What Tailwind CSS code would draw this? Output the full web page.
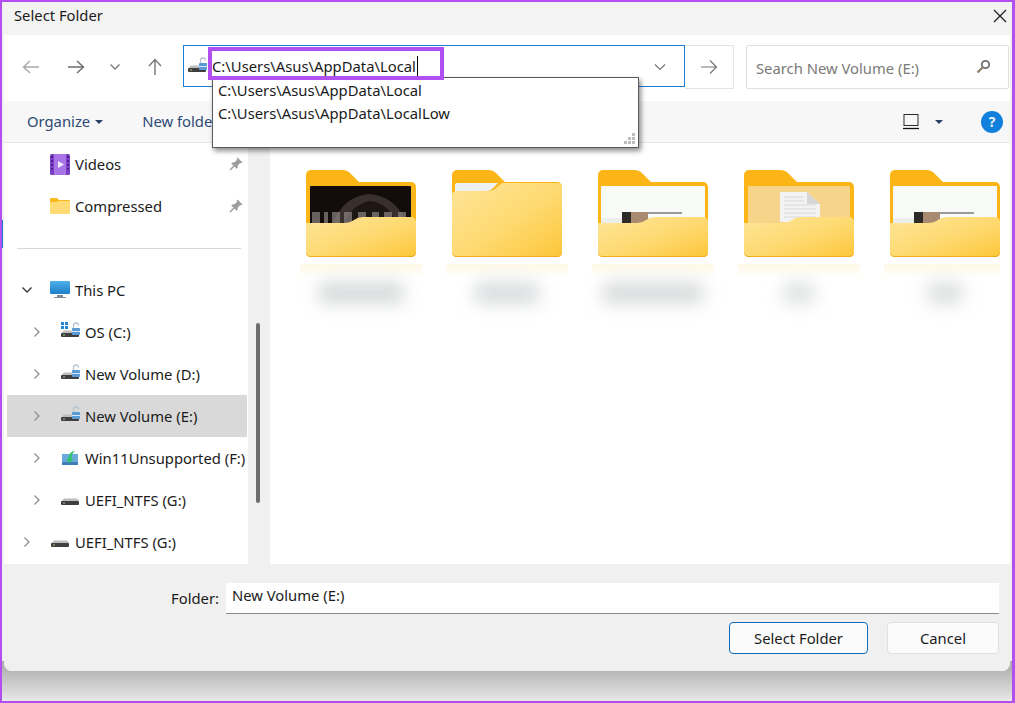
<!DOCTYPE html>
<html>
<head>
<meta charset="utf-8">
<title>Select Folder</title>
<script src="https://cdn.jsdelivr.net/npm/@tailwindcss/browser@4"></script>
</head>
<body class="m-0 overflow-hidden bg-white font-['Noto_Sans',sans-serif] text-[14.8px] text-[#1b1b1b]">

<!-- shared icons -->
<svg class="absolute h-0 w-0" xmlns="http://www.w3.org/2000/svg">
  <defs>
    <linearGradient id="front" x1="0" y1="0" x2="1" y2="1">
      <stop offset="0" stop-color="#fee599"/>
      <stop offset="0.55" stop-color="#fed96f"/>
      <stop offset="1" stop-color="#fdc63a"/>
    </linearGradient>
    <linearGradient id="screen" x1="0" y1="0" x2="0" y2="1">
      <stop offset="0" stop-color="#4fb0ea"/>
      <stop offset="1" stop-color="#1e7ec8"/>
    </linearGradient>
    <symbol id="folderBack" viewBox="0 0 110 87">
      <path d="M5 0H36q5 0 8 3l9 9H105a5 5 0 0 1 5 5V82a5 5 0 0 1-5 5H5a5 5 0 0 1-5-5V5a5 5 0 0 1 5-5z" fill="#fbb516"/>
    </symbol>
    <symbol id="folderFront" viewBox="0 0 110 87">
      <path d="M0 53H38q6 0 10-3t9-3H105a5 5 0 0 1 5 5V82a5 5 0 0 1-5 5H5a5 5 0 0 1-5-5z" fill="url(#front)"/>
      <path d="M0 83a5 5 0 0 0 5 4H105a5 5 0 0 0 5-4a5 5 0 0 1-5 3H5a5 5 0 0 1-5-3z" fill="#f3aa1c"/>
    </symbol>
    <symbol id="drive" viewBox="0 0 20 20">
      <path d="M2 10.500L4 8.500H17L19 10.500V11H2z" fill="#bdbdbd"/>
      <rect x="1" y="11" width="18" height="4" rx="1" fill="#3f3f3f"/>
      <rect x="3" y="12.500" width="2" height="1" fill="#9bd08a"/>
    </symbol>
    <symbol id="lock" viewBox="0 0 20 20">
      <path d="M13.500 6V3.500a2.500 2.500 0 0 1 5 0" fill="none" stroke="#b8c4cf" stroke-width="1.300"/>
      <rect x="12" y="6" width="8" height="7" rx="0.800" fill="#5b9bd5"/>
      <rect x="12" y="9" width="8" height="1" fill="#d6e6f5"/>
    </symbol>
    <symbol id="pin" viewBox="0 0 14 14">
      <path d="M8.500 0.500L13.500 5.500L12.300 6.300L11.200 5.900L8.700 8.400L8.600 10.700L7.600 11.700L2.300 6.400L3.300 5.400L5.600 5.300L8.100 2.800L7.700 1.700z" fill="#9c9c9c"/>
      <path d="M5 9L1 13" stroke="#9c9c9c" stroke-width="1.500"/>
    </symbol>
    <symbol id="chevron" viewBox="0 0 10 14">
      <path d="M2.500 2.500L7 7L2.500 11.500" fill="none" stroke="#8a8a8a" stroke-width="1.200"/>
    </symbol>
    <symbol id="pagePeek" viewBox="0 0 110 87">
      <rect x="3" y="16" width="104" height="40" rx="1" fill="#f8faf7"/>
      <path d="M3 48H107V56H3z" fill="#eceeec"/>
      <rect x="50" y="42" width="34" height="2" fill="#9a9a9a"/>
      <rect x="24" y="42" width="9" height="14" fill="#2d2a28"/>
      <rect x="33" y="42" width="17" height="14" fill="#a78a70"/>
    </symbol>
  </defs>
</svg>

<div class="relative h-[703px] w-[1015px] overflow-hidden border-b-2 border-l-2 border-r-[3px] border-t-2 border-[#b14ff0] bg-[#f0f0f0]">

  <!-- window -->
  <div class="relative mx-[2px] flex h-[669px] flex-col rounded-b-lg bg-[#f0f0f0]">

    <!-- title bar -->
    <div class="flex h-[33px] items-center justify-between bg-[#f3f3f3] pl-[10px] pr-[2px]">
      <span class="pb-[6px]">Select Folder</span>
      <svg class="mb-[5px] mr-[1px] h-[14px] w-[14px]" viewBox="0 0 14 14"><path d="M1 1L13 13M13 1L1 13" stroke="#222" stroke-width="1.300"/></svg>
    </div>

    <!-- address row -->
    <div class="flex h-[66px] items-start bg-white pt-[10px]">
      <div class="flex h-[44px] w-[179px] items-center">
        <svg class="ml-[18px] h-[18px] w-[18px]" viewBox="0 0 18 18"><path d="M17 9H1.500M8 3L1.500 9L8 15" fill="none" stroke="#a9a9a9" stroke-width="1.400"/></svg>
        <svg class="ml-[27px] h-[18px] w-[18px]" viewBox="0 0 18 18"><path d="M1 9H16.500M10 3L16.500 9L10 15" fill="none" stroke="#6b6b6b" stroke-width="1.400"/></svg>
        <svg class="ml-[24px] h-[10px] w-[12px]" viewBox="0 0 12 10"><path d="M1.500 2.500L6 7L10.500 2.500" fill="none" stroke="#777" stroke-width="1.300"/></svg>
        <svg class="ml-[25px] h-[18px] w-[18px]" viewBox="0 0 18 18"><path d="M9 17V1.500M3 8L9 1.500L15 8" fill="none" stroke="#777" stroke-width="1.400"/></svg>
      </div>
      <div class="flex h-[42px] w-[502px] items-center border border-[#1a7fd4] pl-[3px] pr-[18px] pt-px">
        <svg class="h-[20px] w-[20px]" viewBox="0 0 20 20"><use href="#drive"/><use href="#lock"/></svg>
        <span class="ml-[5px]">C:\Users\Asus\AppData\Local</span>
        <span class="ml-px h-[21px] w-px bg-black"></span>
        <svg class="ml-auto h-[10px] w-[12px]" viewBox="0 0 12 10"><path d="M1 2.500L6 7.500L11 2.500" fill="none" stroke="#777" stroke-width="1.200"/></svg>
      </div>
      <div class="flex h-[44px] w-[49px] items-center justify-center border border-l-0 border-[#e3e3e3]">
        <svg class="h-[18px] w-[18px]" viewBox="0 0 18 18"><path d="M1 9H16.500M10 2.500L16.500 9L10 15.500" fill="none" stroke="#777" stroke-width="1.200"/></svg>
      </div>
      <div class="ml-[12px] flex h-[44px] w-[263px] items-center justify-between rounded-[2px] border border-[#e0e0e0] pl-[9px] pr-[17px] pt-[2px] text-[#7a7a7a]">
        <span>Search New Volume (E:)</span>
        <svg class="mb-[3px] h-[15px] w-[15px]" viewBox="0 0 15 15"><circle cx="9.500" cy="5.500" r="3.700" fill="none" stroke="#6f6f6f" stroke-width="1.800"/><path d="M6.800 8.200L1.500 13.500" stroke="#8d7d6d" stroke-width="2.200"/></svg>
      </div>
    </div>

    <!-- toolbar -->
    <div class="flex h-[42px] items-center border-b border-[#e6e6e6] bg-[#f7f7f7] pl-[23px] pr-[7px] text-[#2c4a75]">
      <span>Organize</span>
      <span class="ml-[5px] h-0 w-0 border-x-[4px] border-t-[4px] border-x-transparent border-t-[#2c3e66]"></span>
      <span class="ml-[39px]">New folder</span>
      <svg class="ml-auto h-[18px] w-[18px]" viewBox="0 0 18 18"><rect x="2" y="1.500" width="14" height="11" fill="#f6f6f6" stroke="#2b2b2b"/><path d="M1 15.500H17" stroke="#111" stroke-width="1.300"/></svg>
      <span class="ml-[15px] h-0 w-0 border-x-[4px] border-t-[4px] border-x-transparent border-t-[#2c3e66]"></span>
      <span class="ml-[38px] flex h-[22px] w-[22px] items-center justify-center rounded-full bg-[#1180dc] text-[14px] font-bold text-[#e8f3fc]">?</span>
    </div>

    <!-- main -->
    <div class="flex h-[421px]">
      <!-- nav pane -->
      <div class="w-[244px] overflow-hidden bg-white pl-[3px] pr-px">
        <div class="flex h-[42px] items-center pl-[43px] pr-[4px]">
          <svg class="h-[21px] w-[20px]" viewBox="0 0 20 21"><rect width="20" height="21" rx="1.500" fill="#7d3fc9"/><rect x="4" width="12" height="21" fill="#a974e6"/><path d="M8 7L14 10.500L8 14z" fill="#f4ecff"/><path d="M1 3h2M1 7h2M1 11h2M1 15h2M17 3h2M17 7h2M17 11h2M17 15h2" stroke="#3f1f73" stroke-width="1.500"/></svg>
          <span class="ml-[5px] pt-px">Videos</span>
          <svg class="ml-auto h-[14px] w-[14px]" viewBox="0 0 14 14"><use href="#pin"/></svg>
        </div>
        <div class="flex h-[42px] items-center pl-[43px] pr-[4px]">
          <svg class="h-[16px] w-[20px]" viewBox="0 0 20 16"><path d="M1 0H7L9 2H19a1 1 0 0 1 1 1V15a1 1 0 0 1-1 1H1a1 1 0 0 1-1-1V1a1 1 0 0 1 1-1z" fill="#f9b91f"/><path d="M0 4H7L9 3H20V15a1 1 0 0 1-1 1H1a1 1 0 0 1-1-1z" fill="#fedb74"/></svg>
          <span class="ml-[5px] pt-px">Compressed</span>
          <svg class="ml-auto h-[14px] w-[14px]" viewBox="0 0 14 14"><use href="#pin"/></svg>
        </div>
        <div class="flex h-[42px] items-center pl-[10px] pr-[6px]"><div class="h-px w-full bg-[#d9d9d9]"></div></div>
        <div class="flex h-[42px] items-center pl-[14px]">
          <svg class="h-[10px] w-[12px]" viewBox="0 0 12 10"><path d="M1.500 2.500L6 7L10.500 2.500" fill="none" stroke="#333" stroke-width="1.300"/></svg>
          <svg class="ml-[17px] h-[20px] w-[20px]" viewBox="0 0 20 20"><rect y="1" width="20" height="13" rx="1" fill="url(#screen)"/><path d="M7 15H13V17H16V18H4V17H7z" fill="#7f8a94"/></svg>
          <span class="ml-[5px] pt-px">This PC</span>
        </div>
        <div class="flex h-[42px] items-center pl-[25px]">
          <svg class="h-[14px] w-[10px]" viewBox="0 0 10 14"><use href="#chevron"/></svg>
          <svg class="ml-[18px] h-[20px] w-[20px]" viewBox="0 0 20 20"><use href="#drive"/><use href="#lock"/><path d="M1 0h3v3H1zM5 0h3v3H5zM1 4h3v3H1zM5 4h3v3H5z" fill="#1f86d8"/></svg>
          <span class="ml-[5px] pt-px">OS (C:)</span>
        </div>
        <div class="flex h-[42px] items-center pl-[25px]">
          <svg class="h-[14px] w-[10px]" viewBox="0 0 10 14"><use href="#chevron"/></svg>
          <svg class="ml-[18px] h-[20px] w-[20px]" viewBox="0 0 20 20"><use href="#drive"/><use href="#lock"/></svg>
          <span class="ml-[5px] pt-px">New Volume (D:)</span>
        </div>
        <div class="flex h-[42px] items-center bg-[#d9d9d9] pl-[25px]">
          <svg class="h-[14px] w-[10px]" viewBox="0 0 10 14"><use href="#chevron"/></svg>
          <svg class="ml-[18px] h-[20px] w-[20px]" viewBox="0 0 20 20"><use href="#drive"/><use href="#lock"/></svg>
          <span class="ml-[5px] pt-px">New Volume (E:)</span>
        </div>
        <div class="flex h-[42px] items-center pl-[25px]">
          <svg class="h-[14px] w-[10px]" viewBox="0 0 10 14"><use href="#chevron"/></svg>
          <svg class="ml-[18px] h-[20px] w-[20px]" viewBox="0 0 20 20"><path d="M2 6H18V17H2z" fill="#6ba9dc"/><path d="M2 14H18V17H2z" fill="#3e7fb8"/><path d="M6 11L9.500 15L14 11H11.500C11.500 7 12.500 5 15 3C10.500 3.500 8.500 6.500 8.500 11z" fill="#2fc46a"/></svg>
          <span class="ml-[5px] whitespace-nowrap pt-px">Win11Unsupported (F:)</span>
        </div>
        <div class="flex h-[42px] items-center pl-[25px]">
          <svg class="h-[14px] w-[10px]" viewBox="0 0 10 14"><use href="#chevron"/></svg>
          <svg class="ml-[18px] h-[20px] w-[20px]" viewBox="0 0 20 20"><use href="#drive"/></svg>
          <span class="ml-[5px] pt-px">UEFI_NTFS (G:)</span>
        </div>
        <div class="flex h-[42px] items-center pl-[15px]">
          <svg class="h-[14px] w-[10px]" viewBox="0 0 10 14"><use href="#chevron"/></svg>
          <svg class="ml-[18px] h-[20px] w-[20px]" viewBox="0 0 20 20"><use href="#drive"/></svg>
          <span class="ml-[5px] pt-px">UEFI_NTFS (G:)</span>
        </div>
      </div>

      <!-- scroll strip -->
      <div class="w-[22px] pl-[8px] pt-[180px]">
        <div class="h-[180px] w-[4px] rounded-full bg-[#6e6e6e]"></div>
      </div>

      <!-- folders -->
      <div class="flex flex-1 items-start gap-[36px] overflow-hidden bg-white pl-[36px] pt-[27px]">
        <div class="w-[110px]">
          <svg class="h-[87px] w-[110px]" viewBox="0 0 110 87">
            <use href="#folderBack"/>
            <rect x="4" y="16" width="101" height="40" rx="1" fill="#120c0a"/>
            <path d="M26 56Q36 27 62 24Q90 25 102 56z" fill="#3a302b"/>
            <path d="M36 56Q46 34 64 31Q82 32 92 56z" fill="#1d1613"/>
            <path d="M6 42h8v12H6zM18 42h4v12H18zM26 42h8v12H26zM38 42h8v12H38zM52 42h8v12H52zM66 42h7v12H66zM78 42h8v12H78zM92 42h8v12H92z" fill="#8b8583" opacity="0.7"/>
            <use href="#folderFront"/>
          </svg>
          <div class="-ml-[6px] mt-[7px] h-[14px] w-[122px] bg-gradient-to-b from-[#fff8e6] to-white"></div>
          <div class="mx-auto mt-[5px] h-[20px] w-[84px] bg-[#d3d6d7] blur-[9px]"></div>
        </div>
        <div class="w-[110px]">
          <svg class="h-[87px] w-[110px]" viewBox="0 0 110 87">
            <use href="#folderBack"/>
            <path d="M3 22V15a2 2 0 0 1 2-2H46L40 19Q38 21 34 21H5q-2 0-2 1z" fill="#eef1f3"/>
            <path d="M0 25Q0 21 5 21H36q4 0 7-2l7-6H105a5 5 0 0 1 5 5V82a5 5 0 0 1-5 5H5a5 5 0 0 1-5-5z" fill="url(#front)"/>
            <path d="M0 83a5 5 0 0 0 5 4H105a5 5 0 0 0 5-4a5 5 0 0 1-5 3H5a5 5 0 0 1-5-3z" fill="#f3aa1c"/>
          </svg>
          <div class="-ml-[6px] mt-[7px] h-[14px] w-[122px] bg-gradient-to-b from-[#fff8e6] to-white"></div>
          <div class="mx-auto mt-[5px] h-[20px] w-[64px] bg-[#d6d9da] blur-[9px]"></div>
        </div>
        <div class="w-[110px]">
          <svg class="h-[87px] w-[110px]" viewBox="0 0 110 87">
            <use href="#folderBack"/>
            <use href="#pagePeek"/>
            <use href="#folderFront"/>
          </svg>
          <div class="-ml-[6px] mt-[7px] h-[14px] w-[122px] bg-gradient-to-b from-[#fff8e6] to-white"></div>
          <div class="mx-auto mt-[5px] h-[20px] w-[100px] bg-[#d6d8d9] blur-[9px]"></div>
        </div>
        <div class="w-[110px]">
          <svg class="h-[87px] w-[110px]" viewBox="0 0 110 87">
            <use href="#folderBack"/>
            <rect x="4" y="16" width="102" height="40" rx="1" fill="#f6d48a"/>
            <path d="M36 22H63L76 34V52H36z" fill="#f3f3f3"/>
            <path d="M63 22V34H76z" fill="#d6d6d6"/>
            <path d="M40 27H60M40 31H60M40 35H72M40 39H72M40 43H72M40 47H72" stroke="#d2d2d2" stroke-width="0.800"/>
            <use href="#folderFront"/>
          </svg>
          <div class="-ml-[6px] mt-[7px] h-[14px] w-[122px] bg-gradient-to-b from-[#fff8e6] to-white"></div>
          <div class="mx-auto mt-[5px] h-[20px] w-[30px] bg-[#dcdedf] blur-[9px]"></div>
        </div>
        <div class="w-[110px]">
          <svg class="h-[87px] w-[110px]" viewBox="0 0 110 87">
            <use href="#folderBack"/>
            <use href="#pagePeek"/>
            <use href="#folderFront"/>
          </svg>
          <div class="-ml-[6px] mt-[7px] h-[14px] w-[116px] bg-gradient-to-b from-[#fff8e6] to-white"></div>
          <div class="mx-auto mt-[5px] h-[20px] w-[34px] bg-[#d9dbdc] blur-[9px]"></div>
        </div>
      </div>
    </div>

    <!-- footer -->
    <div class="flex-1 rounded-b-lg bg-[#f0f0f0] pr-[11px] pt-[19px]">
      <div class="flex items-center justify-end">
        <span class="mr-[7px] pb-px">Folder:</span>
        <div class="flex h-[31px] w-[773px] items-center border-b border-[#8a8a8a] bg-white pb-[5px] pl-[6px]">New Volume (E:)</div>
      </div>
      <div class="mt-[8px] flex justify-end gap-[19px]">
        <button class="h-[32px] w-[139px] rounded-[4px] border border-[#0f6cbd] bg-[#fbfbfb]">Select Folder</button>
        <button class="h-[32px] w-[112px] rounded-[4px] border border-[#e0e0e0] bg-[#fbfbfb]">Cancel</button>
      </div>
    </div>
  </div>

  <!-- backdrop shadow under the window, runs behind its rounded corners -->
  <div class="-mt-[10px] h-[40px] bg-gradient-to-b from-[#a8a8a8] to-[#e8e8e8]"></div>

  <!-- autocomplete popup -->
  <div class="absolute left-[210px] top-[75px] h-[71px] w-[427px] border border-[#5a5a5a] bg-white pl-[5px] pt-[1px] shadow-[2px_3px_5px_rgba(0,0,0,0.45)]">
    <div class="h-[23px] leading-[23px]">C:\Users\Asus\AppData\Local</div>
    <div class="h-[23px] leading-[23px]">C:\Users\Asus\AppData\LocalLow</div>
    <svg class="absolute bottom-[3px] right-[3px] h-[11px] w-[11px]" viewBox="0 0 11 11"><path d="M8 0h3v3H8zM4 4h3v3H4zM8 4h3v3H8zM0 8h3v3H0zM4 8h3v3H4zM8 8h3v3H8z" fill="#bdbdbd"/></svg>
  </div>

  <!-- annotation box over the address text -->
  <div class="absolute left-[206px] top-[45px] h-[33px] w-[236px] border-[4px] border-[#b14ff0]"></div>

  <!-- thin blue edge of the window behind -->
  <div class="absolute left-0 top-[218px] h-[28px] w-px bg-[#1a7fd4]"></div>
</div>
</body>
</html>
